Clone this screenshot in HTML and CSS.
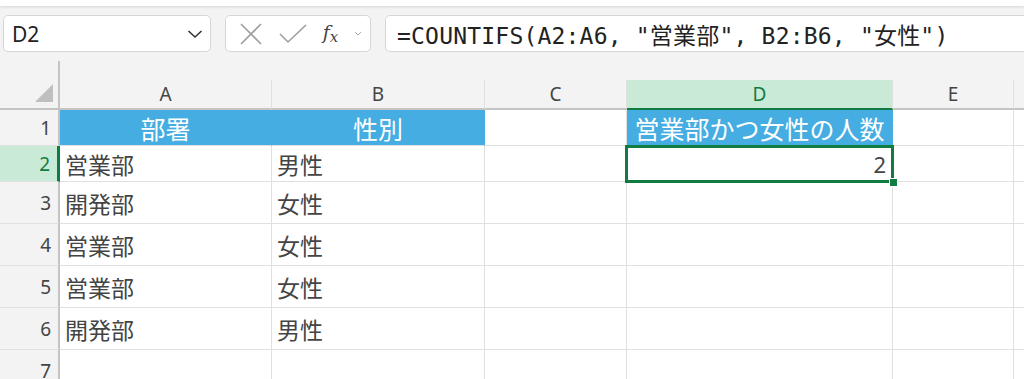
FILE: index.html
```html
<!DOCTYPE html>
<html lang="ja">
<head>
    <meta charset="UTF-8">
    <title>COUNTIFS</title>
    <link rel="stylesheet" href="styles.css">
</head>
<body>
    <div class="ribbon"></div>

    <div class="formula-row">
        <div class="name-box">
            <span>D2</span>
            <svg width="16" height="10" viewBox="0 0 16 10"><path d="M1.5 2 L8 8 L14.5 2" fill="none" stroke="#333" stroke-width="1.6"/></svg>
        </div>
        <div class="func-box">
            <svg width="24" height="24" viewBox="0 0 24 24"><path d="M2 2 L22 22 M22 2 L2 22" stroke="#9e9e9e" stroke-width="1.6"/></svg>
            <svg width="28" height="22" viewBox="0 0 28 22"><path d="M1 11 L9 19 L27 2" fill="none" stroke="#9e9e9e" stroke-width="1.6"/></svg>
            <span class="fx">f<sub>x</sub></span>
            <svg width="8" height="6" viewBox="0 0 8 6"><path d="M1 1 L4 4 L7 1" fill="none" stroke="#aaa" stroke-width="1"/></svg>
        </div>
        <div class="formula-box">=COUNTIFS(A2:A6, "営業部", B2:B6, "女性")</div>
    </div>

    <div class="splitter"><div class="grip"></div></div>

    <div class="sheet">
        <div class="corner"><div class="tri"></div></div>
        <div class="col-head">A</div>
        <div class="col-head">B</div>
        <div class="col-head">C</div>
        <div class="col-head active">D</div>
        <div class="col-head">E</div>
        <div class="col-head"></div>

        <div class="row-head">1</div>
        <div class="cell title">部署</div>
        <div class="cell title">性別</div>
        <div class="cell"></div>
        <div class="cell title">営業部かつ女性の人数</div>
        <div class="cell"></div>
        <div class="cell"></div>

        <div class="row-head active">2</div>
        <div class="cell">営業部</div>
        <div class="cell">男性</div>
        <div class="cell"></div>
        <div class="cell num selected">2</div>
        <div class="cell"></div>
        <div class="cell"></div>

        <div class="row-head">3</div>
        <div class="cell">開発部</div>
        <div class="cell">女性</div>
        <div class="cell"></div>
        <div class="cell"></div>
        <div class="cell"></div>
        <div class="cell"></div>

        <div class="row-head">4</div>
        <div class="cell">営業部</div>
        <div class="cell">女性</div>
        <div class="cell"></div>
        <div class="cell"></div>
        <div class="cell"></div>
        <div class="cell"></div>

        <div class="row-head">5</div>
        <div class="cell">営業部</div>
        <div class="cell">女性</div>
        <div class="cell"></div>
        <div class="cell"></div>
        <div class="cell"></div>
        <div class="cell"></div>

        <div class="row-head">6</div>
        <div class="cell">開発部</div>
        <div class="cell">男性</div>
        <div class="cell"></div>
        <div class="cell"></div>
        <div class="cell"></div>
        <div class="cell"></div>

        <div class="row-head">7</div>
        <div class="cell"></div>
        <div class="cell"></div>
        <div class="cell"></div>
        <div class="cell"></div>
        <div class="cell"></div>
        <div class="cell"></div>
    </div>
</body>
</html>
```

FILE: styles.css
```css
body {
    margin: 0;
    background-color: #f3f3f3;
    font-family: "Noto Sans", "Noto Sans CJK JP", sans-serif;
    color: #333;
    overflow: hidden;
    height: 379px;
}
.ribbon {
    height: 6px;
    background-color: white;
    box-shadow: 0 1px 3px rgba(0, 0, 0, 0.12);
}
.formula-row {
    display: flex;
    gap: 14px;
    margin-top: 9px;
    padding-left: 3px;
    height: 37px;
}
.name-box, .func-box, .formula-box {
    background-color: white;
    border: 1px solid #d6d6d6;
    border-radius: 5px;
    box-sizing: border-box;
    display: flex;
    align-items: center;
}
.name-box {
    width: 208px;
    padding: 0 7px 0 8px;
    justify-content: space-between;
    font-size: 21px;
    color: #222;
}
.func-box {
    width: 146px;
    padding: 0 8px 0 13px;
    justify-content: space-between;
}
.fx {
    font-family: "DejaVu Serif", serif;
    font-style: italic;
    font-size: 19px;
    color: #444;
    line-height: 1;
}
.fx sub {
    font-size: 15px;
    vertical-align: -3px;
}
.formula-box {
    flex: 1;
    margin-right: -20px;
    padding-left: 11px;
    font-family: "DejaVu Sans Mono", "Noto Sans CJK JP", monospace;
    font-size: 23px;
    letter-spacing: 0.2px;
    color: #222;
}
.splitter {
    height: 28px;
    padding-top: 9px;
    box-sizing: border-box;
}
.grip {
    margin-left: 58px;
    width: 2px;
    height: 19px;
    background-color: #c4c4c4;
}
.sheet {
    display: grid;
    grid-template-columns: 60px 212px 213px 142px 266px 121px 1fr;
    grid-template-rows: 30px 36px 36px 42px 42px 42px 42px 42px;
}
.corner {
    border-right: 2px solid #c4c4c4;
    border-bottom: 2px solid #c4c4c4;
    position: relative;
}
.tri {
    position: absolute;
    right: 5px;
    bottom: 6px;
    width: 0;
    height: 0;
    border-left: 18px solid transparent;
    border-bottom: 18px solid #bfbfbf;
}
.col-head {
    border-right: 1px solid #e0e0e0;
    border-bottom: 2px solid #c4c4c4;
    display: flex;
    align-items: center;
    justify-content: center;
    font-size: 19px;
    color: #444;
}
.col-head.active {
    background-color: #caead8;
    color: #107c41;
    border-bottom-color: #107c41;
}
.row-head {
    border-right: 2px solid #c4c4c4;
    border-bottom: 1px solid #e0e0e0;
    display: flex;
    align-items: center;
    justify-content: flex-end;
    padding-right: 7px;
    font-size: 19px;
    color: #444;
}
.row-head.active {
    background-color: #caead8;
    color: #107c41;
    border-right: 3px solid #107c41;
}
.cell {
    background-color: white;
    border-right: 1px solid #e0e0e0;
    border-bottom: 1px solid #e0e0e0;
    display: flex;
    align-items: center;
    padding: 1px 6px 0 5px;
    font-family: "Noto Sans CJK JP", sans-serif;
    font-size: 23px;
    color: #444;
    white-space: nowrap;
}
.cell.title {
    background-color: #45ade2;
    color: white;
    justify-content: center;
    border-right-color: #45ade2;
    padding: 0;
    font-size: 25px;
}
.cell.num {
    justify-content: flex-end;
    font-family: "Noto Sans", sans-serif;
    font-size: 22px;
}
.selected {
    position: relative;
}
.selected::after {
    content: "";
    position: absolute;
    left: -2px;
    top: -1px;
    right: -2px;
    bottom: -2px;
    border: 3px solid #107c41;
}
.selected::before {
    content: "";
    position: absolute;
    right: -6px;
    bottom: -6px;
    width: 7px;
    height: 7px;
    background-color: #107c41;
    border: 1px solid white;
    z-index: 1;
}
```
